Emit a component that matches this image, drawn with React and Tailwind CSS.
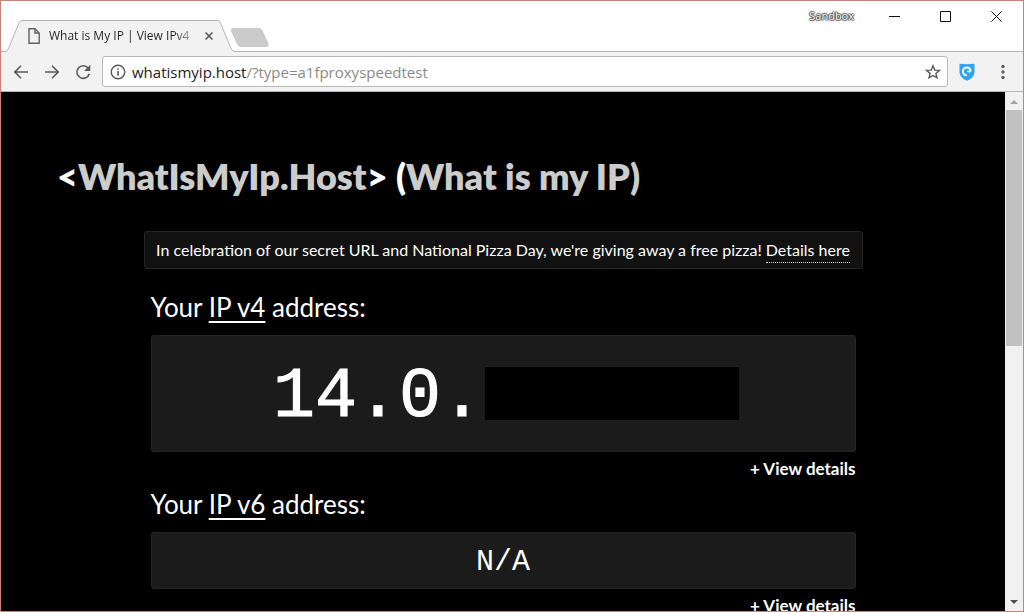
import React from "react";

function TabStrip() {
  return (
    <header className="flex h-[51px] shrink-0 items-end justify-between border-b border-[#b4b4b4] bg-white">
      <div className="-mb-px flex items-end pl-1">
        <div className="relative h-8 w-[232px]">
          <svg className="absolute inset-0" width="232" height="32" viewBox="0 0 232 32" fill="none" aria-hidden="true">
            <path d="M0 32V31.5Q2.500 31.500 3.500 28.500L14 3Q15 .5 18 .5H212Q214.500 .5 215.500 3L226 28.500Q227 31.500 230 31.500H232V32Z" fill="#f2f2f2" />
            <path d="M0 31.500Q2.500 31.500 3.500 28.500L14 3Q15 .5 18 .5H212Q214.500 .5 215.500 3L226 28.500Q227 31.500 230 31.500H232" stroke="#b4b4b4" />
          </svg>
          <div className="relative flex h-8 items-center pl-[23px]">
            <svg width="12" height="16" viewBox="0 0 12 16" fill="none" stroke="#636363" strokeWidth="1.4" aria-hidden="true">
              <path d="M1 .8H7L11.200 5V15.200H1ZM7 .8V5H11.200" />
            </svg>
            <span className="ml-[9px] w-[147px] overflow-hidden whitespace-nowrap bg-gradient-to-r from-[#222] from-85% to-[#ddd] bg-clip-text font-['Open_Sans',sans-serif] text-[12px] leading-4 text-transparent">
              What is My IP | View IPv4
            </span>
            <button type="button" aria-label="Close tab" className="ml-[5px] flex size-4 items-center justify-center">
              <svg width="8" height="8" viewBox="0 0 8 8" stroke="#555" strokeWidth="1.500" aria-hidden="true">
                <path d="M.5 .5L7.500 7.500M7.500 .5L.5 7.500" />
              </svg>
            </button>
          </div>
        </div>
        <button type="button" aria-label="New tab" className="-ml-1.5 mb-[5px]">
          <svg width="38" height="19" viewBox="0 0 38 19" aria-hidden="true">
            <path d="M2 .5H28Q30 .5 31 2.500L37 15.500Q38 18.500 35 18.500H10Q7.500 18.500 6.500 16L.5 3Q0 .5 2 .5Z" fill="#cbcbcb" stroke="#bdbdbd" strokeWidth=".7" />
          </svg>
        </button>
      </div>
      <div className="flex items-center self-start pt-[7px] pr-[19px]">
        <span className="mr-8 font-['Open_Sans',sans-serif] text-[11px] leading-4 text-white [text-shadow:1px_0_1px_#444,-1px_0_1px_#444,0_1px_1px_#444,0_-1px_1px_#444]">
          Sandbox
        </span>
        <div className="flex gap-[35px]">
          <button type="button" aria-label="Minimize" className="flex size-4 items-center justify-center">
            <svg width="11" height="11" viewBox="0 0 11 11" stroke="#111" aria-hidden="true"><path d="M0 5.500H11" /></svg>
          </button>
          <button type="button" aria-label="Maximize" className="flex size-4 items-center justify-center">
            <svg width="11" height="11" viewBox="0 0 11 11" fill="none" stroke="#111" aria-hidden="true"><path d="M.5 .5H10.500V10.500H.5Z" /></svg>
          </button>
          <button type="button" aria-label="Close" className="flex size-4 items-center justify-center">
            <svg width="11" height="11" viewBox="0 0 11 11" stroke="#111" aria-hidden="true"><path d="M.3 .3L10.700 10.700M10.700 .3L.3 10.700" /></svg>
          </button>
        </div>
      </div>
    </header>
  );
}

function Toolbar() {
  return (
    <nav className="flex h-10 shrink-0 items-center border-b border-[#b6b6b6] bg-[#f2f2f2] pl-3">
      <div className="flex gap-[15px]">
        <button type="button" aria-label="Back">
          <svg width="16" height="16" viewBox="0 0 16 16" fill="none" stroke="#5a5a5a" strokeWidth="1.600" aria-hidden="true">
            <path d="M15 8H2M8 1.800L1.800 8L8 14.200" />
          </svg>
        </button>
        <button type="button" aria-label="Forward">
          <svg width="16" height="16" viewBox="0 0 16 16" fill="none" stroke="#5a5a5a" strokeWidth="1.600" aria-hidden="true">
            <path d="M1 8H14M8 1.800L14.200 8L8 14.200" />
          </svg>
        </button>
        <button type="button" aria-label="Reload">
          <svg width="16" height="16" viewBox="0 0 16 16" fill="none" aria-hidden="true">
            <path d="M13.200 4.200A6.300 6.300 0 1 0 14.300 9.700" stroke="#5a5a5a" strokeWidth="1.600" />
            <path d="M15.300 .8V7H9.100Z" fill="#5a5a5a" />
          </svg>
        </button>
      </div>
      <div className="ml-[11px] flex h-[31px] flex-1 items-center rounded-[3px] border border-[#b8b8b8] bg-white pl-[7px] pr-1.5">
        <svg width="16" height="16" viewBox="0 0 16 16" fill="none" aria-hidden="true">
          <circle cx="8" cy="8" r="6.800" stroke="#5a5a5a" strokeWidth="1.400" />
          <path d="M8 7V11.800M8 4.200V5.800" stroke="#5a5a5a" strokeWidth="1.600" />
        </svg>
        <a href="#address" className="ml-1.5 flex-1 whitespace-nowrap font-['Open_Sans',sans-serif] text-[15px] leading-5 text-[#8a8a8a]">
          <span className="text-[#222]">whatismyip.host</span>/?type=a1fproxyspeedtest
        </a>
        <button type="button" aria-label="Bookmark this page">
          <svg width="16" height="16" viewBox="0 0 16 16" fill="none" stroke="#5a5a5a" strokeWidth="1.400" aria-hidden="true">
            <path d="M8 1.800L9.800 6.100L14.400 6.400L10.900 9.400L12 13.900L8 11.500L4 13.900L5.100 9.400L1.600 6.400L6.200 6.100Z" />
          </svg>
        </button>
      </div>
      <button type="button" aria-label="VPN extension" className="ml-2.5">
        <svg width="18" height="18" viewBox="0 0 18 18" fill="none" aria-hidden="true">
          <path d="M1.500 .8Q9 1.500 16.500 .8V9.500Q16 14.800 9 17.800Q2 14.800 1.500 9.500Z" fill="#2ea3f8" />
          <path d="M9 12.300A3.900 3.900 0 1 1 12.600 7.500Q12.200 9.200 9.400 8.200" stroke="#fff" strokeWidth="1.800" />
        </svg>
      </button>
      <button type="button" aria-label="Menu" className="ml-[18px] mr-[11px]">
        <svg width="18" height="16" viewBox="0 0 18 16" fill="#5a5a5a" aria-hidden="true">
          <circle cx="9" cy="2.500" r="1.700" /><circle cx="9" cy="8" r="1.700" /><circle cx="9" cy="13.500" r="1.700" />
        </svg>
      </button>
    </nav>
  );
}

function AddressSection({ version, children }) {
  return (
    <section>
      <h2 className="mb-2 text-[26px] leading-10">
        Your <a href={"#" + version} className="underline decoration-2 underline-offset-4">IP {version}</a> address:
      </h2>
      <div className="flex justify-center rounded-[3px] border border-[#242424] bg-[#1b1b1b] font-['Liberation_Mono',monospace]">
        {children}
      </div>
      <div className="flex justify-end pt-0.5">
        <button type="button" className="text-[17px] font-bold leading-[30px]">+ View details</button>
      </div>
    </section>
  );
}

function Scrollbar() {
  return (
    <aside className="flex w-[18px] shrink-0 flex-col items-center bg-[#f1f1f1]" aria-label="Page scroll">
      <svg width="18" height="18" viewBox="0 0 18 18" fill="#a3a3a3" aria-hidden="true"><path d="M5 12L9 8L13 12Z" /></svg>
      <div className="h-[236px] w-4 bg-[#c1c1c1]" />
      <svg className="mt-auto" width="18" height="18" viewBox="0 0 18 18" fill="#505050" aria-hidden="true"><path d="M5 7H13L9 11Z" /></svg>
    </aside>
  );
}

export default function App() {
  return (
    <div className="flex h-screen flex-col overflow-hidden border border-[#c28573] bg-white">
      <TabStrip />
      <Toolbar />
      <div className="flex min-h-0 flex-1">
        <main className="min-w-0 flex-1 overflow-hidden bg-black pt-[60px] font-['Lato',sans-serif] text-white">
          <h1 className="mb-[31px] pl-14 text-[36px] font-extrabold leading-[48px]">
            &lt;<span className="text-[#ccc]">WhatIsMyIp.Host</span>&gt; (<span className="text-[#ccc]">What is my IP)</span>
          </h1>
          <p className="mx-auto mb-[18px] flex h-[38px] w-full max-w-[719px] items-center justify-center gap-1 rounded-[3px] border border-[#242424] bg-[#111] text-[16px] leading-6">
            In celebration of our secret URL and National Pizza Day, we're giving away a free pizza!
            <a href="#details" className="border-b border-dotted border-[#ccc]">Details here</a>
          </p>
          <div className="mx-auto max-w-[705px]">
            <AddressSection version="v4">
              <div className="flex h-[115px] items-center pl-1.5 text-[70px] leading-none">
                <span className="pt-2 [-webkit-text-stroke:1px_white]">14.0.</span>
                <span className="ml-0.5 h-[53px] w-[254px] bg-black" />
              </div>
            </AddressSection>
            <AddressSection version="v6">
              <div className="pt-1 text-[30px] leading-[51px]">N/A</div>
            </AddressSection>
          </div>
        </main>
        <Scrollbar />
      </div>
    </div>
  );
}
